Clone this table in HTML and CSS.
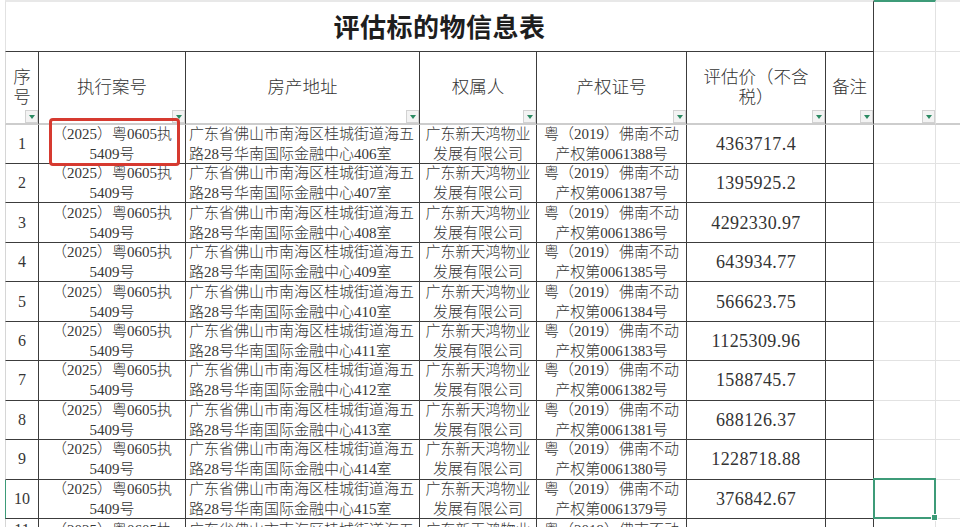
FILE: index.html
```html
<!DOCTYPE html>
<html lang="zh-CN">
<head>
<meta charset="utf-8">
<title>评估标的物信息表</title>
<link rel="stylesheet" href="styles.css">
</head>
<body>
<div class="sheet">
  <div class="c title">评估标的物信息表</div>
  <div class="c g top-sel"></div>
  <div class="c g top"></div>

  <div class="c h first">序<br>号<span class="fb"></span></div>
  <div class="c h">执行案号<span class="fb"></span></div>
  <div class="c h">房产地址<span class="fb"></span></div>
  <div class="c h">权属人<span class="fb"></span></div>
  <div class="c h">产权证号<span class="fb"></span></div>
  <div class="c h">评估价（不含<br>税）<span class="fb"></span></div>
  <div class="c h">备注<span class="fb"></span></div>
  <div class="c h hg"><span class="fb"></span></div>
  <div class="c h hg"></div>

  <div class="c n first">1</div>
  <div class="c">（2025）粤0605执<br>5409号<span class="mark"></span></div>
  <div class="c addr">广东省佛山市南海区桂城街道海五<br>路28号华南国际金融中心406室</div>
  <div class="c">广东新天鸿物业<br>发展有限公司</div>
  <div class="c">粤（2019）佛南不动<br>产权第0061388号</div>
  <div class="c val">4363717.4</div>
  <div class="c"></div>
  <div class="c g"></div>
  <div class="c g"></div>

  <div class="c n first">2</div>
  <div class="c">（2025）粤0605执<br>5409号</div>
  <div class="c addr">广东省佛山市南海区桂城街道海五<br>路28号华南国际金融中心407室</div>
  <div class="c">广东新天鸿物业<br>发展有限公司</div>
  <div class="c">粤（2019）佛南不动<br>产权第0061387号</div>
  <div class="c val">1395925.2</div>
  <div class="c"></div>
  <div class="c g"></div>
  <div class="c g"></div>

  <div class="c n first">3</div>
  <div class="c">（2025）粤0605执<br>5409号</div>
  <div class="c addr">广东省佛山市南海区桂城街道海五<br>路28号华南国际金融中心408室</div>
  <div class="c">广东新天鸿物业<br>发展有限公司</div>
  <div class="c">粤（2019）佛南不动<br>产权第0061386号</div>
  <div class="c val">4292330.97</div>
  <div class="c"></div>
  <div class="c g"></div>
  <div class="c g"></div>

  <div class="c n first">4</div>
  <div class="c">（2025）粤0605执<br>5409号</div>
  <div class="c addr">广东省佛山市南海区桂城街道海五<br>路28号华南国际金融中心409室</div>
  <div class="c">广东新天鸿物业<br>发展有限公司</div>
  <div class="c">粤（2019）佛南不动<br>产权第0061385号</div>
  <div class="c val">643934.77</div>
  <div class="c"></div>
  <div class="c g"></div>
  <div class="c g"></div>

  <div class="c n first">5</div>
  <div class="c">（2025）粤0605执<br>5409号</div>
  <div class="c addr">广东省佛山市南海区桂城街道海五<br>路28号华南国际金融中心410室</div>
  <div class="c">广东新天鸿物业<br>发展有限公司</div>
  <div class="c">粤（2019）佛南不动<br>产权第0061384号</div>
  <div class="c val">566623.75</div>
  <div class="c"></div>
  <div class="c g"></div>
  <div class="c g"></div>

  <div class="c n first">6</div>
  <div class="c">（2025）粤0605执<br>5409号</div>
  <div class="c addr">广东省佛山市南海区桂城街道海五<br>路28号华南国际金融中心411室</div>
  <div class="c">广东新天鸿物业<br>发展有限公司</div>
  <div class="c">粤（2019）佛南不动<br>产权第0061383号</div>
  <div class="c val">1125309.96</div>
  <div class="c"></div>
  <div class="c g"></div>
  <div class="c g"></div>

  <div class="c n first">7</div>
  <div class="c">（2025）粤0605执<br>5409号</div>
  <div class="c addr">广东省佛山市南海区桂城街道海五<br>路28号华南国际金融中心412室</div>
  <div class="c">广东新天鸿物业<br>发展有限公司</div>
  <div class="c">粤（2019）佛南不动<br>产权第0061382号</div>
  <div class="c val">1588745.7</div>
  <div class="c"></div>
  <div class="c g"></div>
  <div class="c g"></div>

  <div class="c n first">8</div>
  <div class="c">（2025）粤0605执<br>5409号</div>
  <div class="c addr">广东省佛山市南海区桂城街道海五<br>路28号华南国际金融中心413室</div>
  <div class="c">广东新天鸿物业<br>发展有限公司</div>
  <div class="c">粤（2019）佛南不动<br>产权第0061381号</div>
  <div class="c val">688126.37</div>
  <div class="c"></div>
  <div class="c g"></div>
  <div class="c g"></div>

  <div class="c n first">9</div>
  <div class="c">（2025）粤0605执<br>5409号</div>
  <div class="c addr">广东省佛山市南海区桂城街道海五<br>路28号华南国际金融中心414室</div>
  <div class="c">广东新天鸿物业<br>发展有限公司</div>
  <div class="c">粤（2019）佛南不动<br>产权第0061380号</div>
  <div class="c val">1228718.88</div>
  <div class="c"></div>
  <div class="c g"></div>
  <div class="c g"></div>

  <div class="c n first active-row">10</div>
  <div class="c">（2025）粤0605执<br>5409号</div>
  <div class="c addr">广东省佛山市南海区桂城街道海五<br>路28号华南国际金融中心415室</div>
  <div class="c">广东新天鸿物业<br>发展有限公司</div>
  <div class="c">粤（2019）佛南不动<br>产权第0061379号</div>
  <div class="c val">376842.67</div>
  <div class="c"></div>
  <div class="c g"><span class="sel"><span class="handle"></span></span></div>
  <div class="c g"></div>

  <div class="c n first t">11</div>
  <div class="c t">（2025）粤0605执<br>5409号</div>
  <div class="c addr t">广东省佛山市南海区桂城街道海五<br>路28号华南国际金融中心416室</div>
  <div class="c t">广东新天鸿物业<br>发展有限公司</div>
  <div class="c t">粤（2019）佛南不动<br>产权第0061378号</div>
  <div class="c val"></div>
  <div class="c"></div>
  <div class="c g"></div>
  <div class="c g"></div>
</div>
</body>
</html>
```

FILE: styles.css
```css
html, body {
  margin: 0;
  padding: 0;
  overflow: hidden;
  background: #ffffff;
}

body {
  padding-left: 5px;
  font-family: "Liberation Serif", "Noto Sans CJK SC", serif;
  font-weight: 300;
  color: #363636;
}

.sheet {
  display: grid;
  grid-template-columns: 34px 147px 234px 117px 150px 139px 48px 62px 140px;
  grid-template-rows: 52px 73px 39px repeat(9, 39.45px) 40px;
  width: max-content;
}

.c {
  box-sizing: border-box;
  position: relative;
  display: flex;
  align-items: center;
  justify-content: center;
  text-align: center;
  border-right: 1px solid #3c3c3c;
  border-bottom: 1px solid #3c3c3c;
  font-size: 15px;
  line-height: 20px;
  white-space: nowrap;
}

.first {
  border-left: 1px solid #d6d6d6;
}

.title {
  grid-column: 1 / 8;
  border-top: 2px solid #e8e8e8;
  border-left: 1px solid #e2e2e2;
  padding-top: 5px;
  font-size: 26px;
  font-weight: 700;
  color: #1e1e1e;
  letter-spacing: 0.5px;
}

.g {
  border-right: 1px solid #e2e2e2;
  border-bottom: 1px solid #e2e2e2;
}

.top {
  border-top: 2px solid #e8e8e8;
}

.top-sel {
  border-top: 2px solid #3d9b78;
}

.h {
  font-size: 17.5px;
  line-height: 20px;
  color: #333333;
  border-bottom: 2px solid #cdcdcd;
  padding-bottom: 2px;
}

.hg {
  border-right: 1px solid #e2e2e2;
}

.fb {
  position: absolute;
  right: 0;
  bottom: 0;
  width: 13px;
  height: 13px;
  box-sizing: border-box;
  background: #f3f3f3;
  border: 1px solid #d2d2d2;
  display: flex;
  align-items: center;
  justify-content: center;
}

.fb::after {
  content: "";
  width: 0;
  height: 0;
  border-left: 3px solid transparent;
  border-right: 3px solid transparent;
  border-top: 4px solid #2b8a62;
}

.n {
  font-size: 16px;
}

.addr {
  justify-content: flex-start;
  text-align: left;
  padding-left: 3px;
}

.val {
  font-size: 18px;
  letter-spacing: 0.4px;
  color: #333333;
}

.t {
  align-items: flex-start;
  padding-top: 1px;
}

.mark {
  position: absolute;
  left: 10px;
  top: -7px;
  width: 131px;
  height: 48px;
  box-sizing: border-box;
  border: 3px solid #d63a30;
  border-radius: 4px;
  z-index: 2;
}

.active-row {
  border-left: 1px solid #3d9b78;
}

.sel {
  position: absolute;
  left: -1px;
  top: -2px;
  width: 63px;
  height: 41px;
  box-sizing: border-box;
  border: 2px solid #3d9b78;
  z-index: 2;
}

.handle {
  position: absolute;
  right: -4px;
  bottom: -4px;
  width: 5px;
  height: 5px;
  background: #3d9b78;
  border: 1px solid #ffffff;
}
```
